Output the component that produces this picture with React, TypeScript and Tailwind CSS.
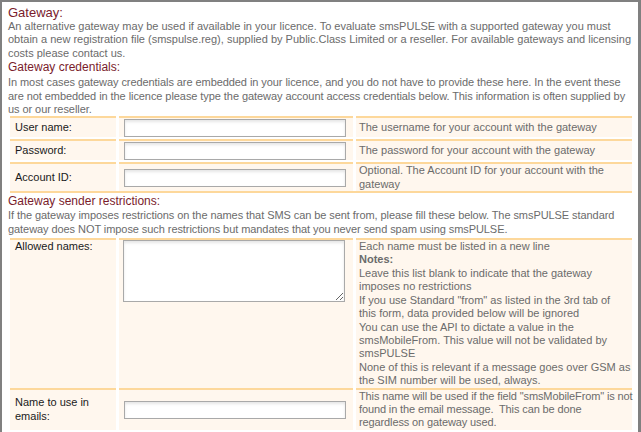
export default function App() {
  const cell = "bg-[#fff7ee] border-t-2 border-[#fdd89b]";
  const inputCls =
    "w-[222px] h-[18px] border border-[#a9a9a9] bg-white shadow-[inset_0_2px_3px_rgba(0,0,0,0.1)] outline-none";
  return (
    <div className="w-[641px] h-[432px] overflow-hidden bg-white border-t-2 border-l-2 border-r-[3px] border-[#808080] pl-[6px] pr-[4px] font-['Liberation_Sans',Arial,sans-serif] text-[11px] leading-[13.4px] text-[#6b6b6b]">
      <h1 className="mt-[3px] text-[13px] leading-[15px] text-[#7a1c2c]">Gateway:</h1>
      <p className="whitespace-nowrap">
        An alternative gateway may be used if available in your licence. To evaluate smsPULSE with a supported gateway you must
        <br />
        obtain a new registration file (smspulse.reg), supplied by Public.Class Limited or a reseller. For available gateways and licensing
        <br />
        costs please contact us.
      </p>
      <h2 className="text-[12px] leading-[15px] text-[#7a1c2c]">Gateway credentials:</h2>
      <p className="mt-[1px] whitespace-nowrap tracking-[-0.07px]">
        In most cases gateway credentials are embedded in your licence, and you do not have to provide these here. In the event these
        <br />
        are not embedded in the licence please type the gateway account access credentials below. This information is often supplied by
        <br />
        us or our reseller.
      </p>

      <div className="ml-[2px] w-[622px] border-b-2 border-[#fdd89b]">
        <div className="grid grid-cols-[106px_234px_276px] gap-x-[3px] gap-y-[2px]">
          <div className={`${cell} min-h-[21px] flex items-center px-[5px] text-[#1a1a1a]`}>User name:</div>
          <div className={`${cell} min-h-[21px] flex items-center pl-[5px]`}>
            <input className={inputCls} />
          </div>
          <div className={`${cell} min-h-[21px] flex items-center pl-[3px]`}>The username for your account with the gateway</div>

          <div className={`${cell} min-h-[21px] flex items-center px-[5px] text-[#1a1a1a]`}>Password:</div>
          <div className={`${cell} min-h-[21px] flex items-center pl-[5px]`}>
            <input className={inputCls} type="password" />
          </div>
          <div className={`${cell} min-h-[21px] flex items-center pl-[3px]`}>The password for your account with the gateway</div>

          <div className={`${cell} min-h-[21px] flex items-center px-[5px] text-[#1a1a1a]`}>Account ID:</div>
          <div className={`${cell} min-h-[21px] flex items-center pl-[5px]`}>
            <input className={inputCls} />
          </div>
          <div className={`${cell} min-h-[21px] flex items-center pl-[3px]`}>
            <span>
              Optional. The Account ID for your account with the
              <br />
              gateway
            </span>
          </div>
        </div>
      </div>

      <h2 className="mt-[1px] text-[12px] leading-[15px] text-[#7a1c2c]">Gateway sender restrictions:</h2>
      <p className="whitespace-nowrap tracking-[-0.07px]">
        If the gateway imposes restrictions on the names that SMS can be sent from, please fill these below. The smsPULSE standard
        <br />
        gateway does NOT impose such restrictions but mandates that you never send spam using smsPULSE.
      </p>

      <div className="mt-[2px] ml-[2px] w-[622px]">
        <div className="grid grid-cols-[106px_234px_276px] gap-x-[3px]">
          <div className={`${cell} px-[5px] text-[#1a1a1a]`}>Allowed names:</div>
          <div className={`${cell} pl-[4px]`}>
            <textarea className="block w-[222px] h-[62px] border border-[#a9a9a9] bg-white shadow-[inset_0_2px_3px_rgba(0,0,0,0.1)] outline-none" />
          </div>
          <div className={`${cell} pl-[3px] whitespace-nowrap`}>
            Each name must be listed in a new line
            <br />
            <b>Notes:</b>
            <br />
            Leave this list blank to indicate that the gateway
            <br />
            imposes no restrictions
            <br />
            If you use Standard "from" as listed in the 3rd tab of
            <br />
            this form, data provided below will be ignored
            <br />
            You can use the API to dictate a value in the
            <br />
            smsMobileFrom. This value will not be validated by
            <br />
            smsPULSE
            <br />
            None of this is relevant if a message goes over GSM as
            <br />
            the SIM number will be used, always.
          </div>

          <div className={`${cell} flex items-center px-[5px] text-[#1a1a1a]`}>
            <span>
              Name to use in
              <br />
              emails:
            </span>
          </div>
          <div className={`${cell} flex items-center pl-[5px]`}>
            <input className={inputCls} />
          </div>
          <div className={`${cell} pl-[3px] whitespace-nowrap tracking-[-0.12px]`}>
            This name will be used if the field "smsMobileFrom" is not
            <br />
            found in the email message.&nbsp; This can be done
            <br />
            regardless on gateway used.
          </div>

          <div className={`${cell} mt-[2px] h-[20px]`} />
          <div className={`${cell} mt-[2px] h-[20px]`} />
          <div className={`${cell} mt-[2px] h-[20px]`} />
        </div>
      </div>
    </div>
  );
}
